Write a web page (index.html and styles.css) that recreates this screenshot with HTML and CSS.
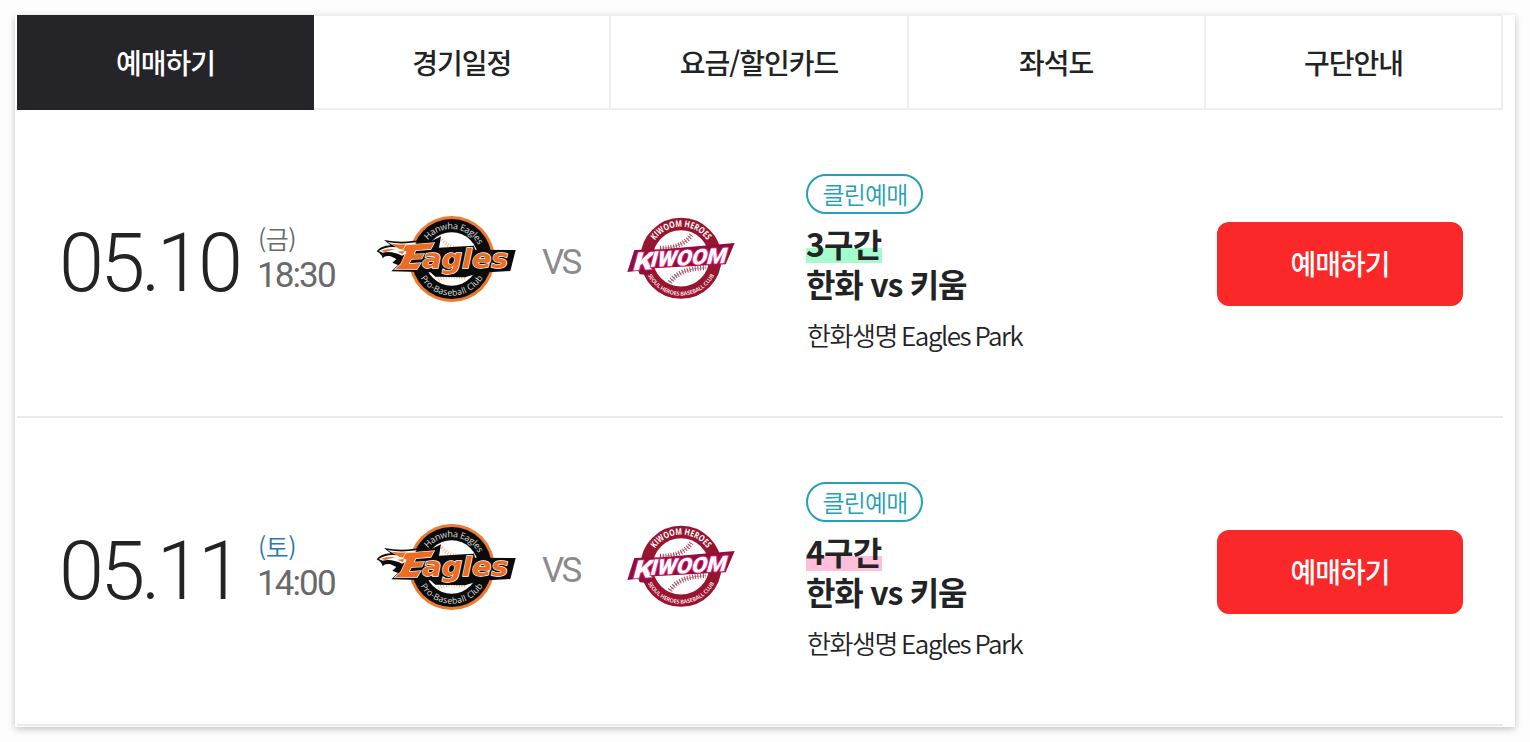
FILE: index.html
```html
<!DOCTYPE html>
<html lang="ko">
<head>
    <meta charset="UTF-8">
    <meta name="viewport" content="width=device-width, initial-scale=1.0">
    <title>예매하기</title>
    <link rel="stylesheet" href="styles.css">
</head>
<body>
    <!-- team emblems, reused in every row -->
    <svg class="defs" width="0" height="0">
        <symbol id="eagles" viewBox="0 0 450 315">
            <path id="eagles-top" d="M154 163 A91 91 0 0 1 336 163" fill="none"/>
            <path id="eagles-bottom" d="M136 163 A109 109 0 0 0 354 163" fill="none"/>
            <circle cx="245" cy="162" r="129" fill="#ed7a30"/>
            <circle cx="245" cy="162" r="120" fill="#0b0b0b"/>
            <circle cx="245" cy="162" r="80" fill="#fff"/>
            <path d="M216 103 Q235 132 285 128 M205 225 Q235 208 291 220" fill="none" stroke="#f5b58d" stroke-width="11" stroke-dasharray="3 5"/>
            <text class="arc" font-size="27" fill="#ddd"><textPath href="#eagles-top" startOffset="53%" text-anchor="middle" textLength="180">Hanwha Eagles</textPath></text>
            <text class="arc" font-size="26" fill="#ddd"><textPath href="#eagles-bottom" startOffset="50%" text-anchor="middle" textLength="225">Pro-Baseball Club</textPath></text>
            <path d="M20 139 Q32 122 62 121 L42 105 Q90 114 132 107 L186 107 L213 94 L207 128 L285 124 L312 122 L315 134 L437 135 L421 198 L330 203 L285 217 L196 215 L181 202 L64 199 L84 180 L67 173 L79 162 L60 153 Q43 151 38 160 Q36 147 20 139Z" fill="#0b0b0b"/>
            <path d="M26 138 Q50 123 80 127 L52 111 Q91 119 140 112 L112 145 L96 152 Q66 137 38 143Z" fill="#fff"/>
            <path d="M32 138 Q49 130 76 133 Q58 137 47 141Z M64 116 Q105 121 135 117 L108 135 L88 132Z M82 140 L104 138 L98 147Z" fill="#ed6c22"/>
            <g class="wordmark" fill="#ed6c22" stroke="#fff" stroke-width="4" paint-order="stroke">
                <path d="M108 121 L192 114 L182 132 L137 136 L131 148 L162 147 L155 161 L124 162 L116 177 L152 174 L141 192 L76 192 L93 177 L110 140 L99 136Z"/>
                <text x="157" y="190" font-size="80" textLength="258" lengthAdjust="spacingAndGlyphs">agles</text>
            </g>
        </symbol>
        <symbol id="kiwoom" viewBox="0 0 375 315">
            <path id="kiwoom-top" d="M88 160 A95 95 0 0 1 278 160" fill="none"/>
            <path id="kiwoom-bottom" d="M71 160 A112 112 0 0 0 295 160" fill="none"/>
            <circle cx="183" cy="160" r="103" fill="#fff" stroke="#97152f" stroke-width="37"/>
            <path d="M120 130 Q187 130 214 90 M150 232 Q178 190 258 188" fill="none" stroke="#b87984" stroke-width="2"/>
            <path d="M120 130 Q187 130 214 90 M150 232 Q178 190 258 188" fill="none" stroke="#a7485a" stroke-width="15" stroke-dasharray="3 5"/>
            <text class="arc bold" font-size="27" fill="#fff"><textPath href="#kiwoom-top" startOffset="50%" text-anchor="middle" textLength="184" lengthAdjust="spacingAndGlyphs">KIWOOM HEROES</textPath></text>
            <text class="arc bold" font-size="17" fill="#efd3da"><textPath href="#kiwoom-bottom" startOffset="50%" text-anchor="middle" textLength="246">SEOUL HEROES BASEBALL CLUB</textPath></text>
            <path d="M43 135 L127 133 L344 114 L317 178 L101 190 L87 210 L59 208 L55 197 L22 201Z" fill="#8e1034"/>
            <g class="heroes" fill="#fff" stroke="#e0208a" stroke-width="5" paint-order="stroke">
                <text transform="translate(36 196) rotate(-3) skewX(-18)" font-size="73" textLength="58" lengthAdjust="spacingAndGlyphs">K</text>
                <text transform="translate(88 186) rotate(-3) skewX(-18)" font-size="64" textLength="228" lengthAdjust="spacingAndGlyphs">IWOOM</text>
            </g>
        </symbol>
    </svg>

    <div class="card">
        <nav class="tabs">
            <a class="tab active">예매하기</a>
            <a class="tab">경기일정</a>
            <a class="tab">요금/할인카드</a>
            <a class="tab">좌석도</a>
            <a class="tab">구단안내</a>
        </nav>

        <div class="game">
            <div class="date">05.10</div>
            <div class="when">
                <span class="day">(금)</span>
                <span class="time">18:30</span>
            </div>
            <svg class="logo" width="150" height="105"><use href="#eagles"/></svg>
            <div class="vs">VS</div>
            <svg class="logo" width="125" height="105"><use href="#kiwoom"/></svg>
            <div class="info">
                <span class="badge">클린예매</span>
                <strong class="title"><span class="mark green">3구간</span><br>한화 vs 키움</strong>
                <span class="place">한화생명 Eagles Park</span>
            </div>
            <button class="book">예매하기</button>
        </div>

        <div class="game">
            <div class="date">05.11</div>
            <div class="when">
                <span class="day sat">(토)</span>
                <span class="time">14:00</span>
            </div>
            <svg class="logo" width="150" height="105"><use href="#eagles"/></svg>
            <div class="vs">VS</div>
            <svg class="logo" width="125" height="105"><use href="#kiwoom"/></svg>
            <div class="info">
                <span class="badge">클린예매</span>
                <strong class="title"><span class="mark pink">4구간</span><br>한화 vs 키움</strong>
                <span class="place">한화생명 Eagles Park</span>
            </div>
            <button class="book">예매하기</button>
        </div>
    </div>
</body>
</html>
```
FILE: styles.css
```css
* {
    box-sizing: border-box;
}
body {
    margin: 0;
    padding: 15px;
    background: #fdfdfd;
    color: #222325;
    font-family: "Noto Sans CJK KR", sans-serif;
    overflow: hidden;
}
.defs {
    display: block;
}
.card {
    width: 1500px;
    height: 712px;
    padding: 0 12px 0 2px;
    background: #fff;
    box-shadow: 0 2px 7px rgba(0, 0, 0, 0.24);
}
.tabs {
    display: grid;
    grid-template-columns: repeat(5, 1fr);
    height: 95px;
}
.tab {
    display: flex;
    align-items: center;
    justify-content: center;
    border: solid #eee;
    border-width: 1px 2px 2px 0;
    font-size: 28px;
    font-weight: 500;
    letter-spacing: -1px;
}
.tab.active {
    padding-left: 2px;
    background: #252429;
    border-color: #252429;
    color: #fff;
}
.game {
    display: grid;
    grid-template-columns: 198px 112px 150px 100px 125px 472px 246px;
    align-items: start;
    height: 308px;
    padding-left: 43px;
    border-bottom: 2px solid #eaeaea;
}
.date {
    margin-left: -1px;
    padding-top: 106px;
    font: 300 81px/96px Roboto, sans-serif;
    letter-spacing: -3.8px;
}
.when {
    display: flex;
    flex-direction: column;
    padding-top: 110px;
    color: #68696b;
}
.day {
    font-size: 25px;
    line-height: 36px;
    font-weight: 350;
    letter-spacing: -0.5px;
}
.day.sat {
    color: #2878b0;
}
.time {
    margin: 1px 0 0 -1px;
    font: 400 35px/38px Roboto, sans-serif;
    letter-spacing: -1.9px;
}
.logo {
    margin-top: 95px;
}
.vs {
    padding-top: 132px;
    color: #8b8b8d;
    font: 400 35px/42px Roboto, sans-serif;
    letter-spacing: -2.8px;
    text-indent: 22px;
}
.info {
    display: flex;
    flex-direction: column;
    align-items: flex-start;
    padding: 64px 0 0 61px;
}
.badge {
    width: 117px;
    height: 40px;
    padding-left: 1px;
    border: 2px solid #26a0b4;
    border-radius: 20px;
    color: #26a0b4;
    font-size: 24px;
    font-weight: 350;
    line-height: 36px;
    letter-spacing: -0.8px;
    text-align: center;
}
.title {
    margin-top: 9px;
    font-size: 32px;
    font-weight: 700;
    line-height: 40px;
    letter-spacing: -1.2px;
}
.mark {
    display: inline-block;
    height: 40px;
    padding-right: 1px;
    letter-spacing: -0.8px;
    vertical-align: top;
}
.green {
    background: linear-gradient(#a5fbcc, #a5fbcc) 0 25px / 100% 16px no-repeat;
}
.pink {
    background: linear-gradient(#ffbfdb, #ffbfdb) 0 25px / 100% 16px no-repeat;
}
.place {
    margin-top: 13px;
    padding-left: 1px;
    font-size: 26px;
    font-weight: 350;
    line-height: 38px;
    letter-spacing: -1.45px;
    word-spacing: -1.6px;
}
.book {
    width: 246px;
    height: 84px;
    margin-top: 112px;
    padding: 0 0 2px;
    border: none;
    border-radius: 12px;
    background: #fa2828;
    color: #fff;
    font: 500 28px "Noto Sans CJK KR", sans-serif;
    letter-spacing: -1px;
}
.arc {
    font-family: "Open Sans", sans-serif;
}
.bold {
    font-weight: 700;
}
.wordmark {
    font-family: "DejaVu Sans", sans-serif;
    font-style: italic;
    font-weight: 700;
}
.heroes {
    font-family: Roboto, sans-serif;
    font-weight: 900;
}
```
